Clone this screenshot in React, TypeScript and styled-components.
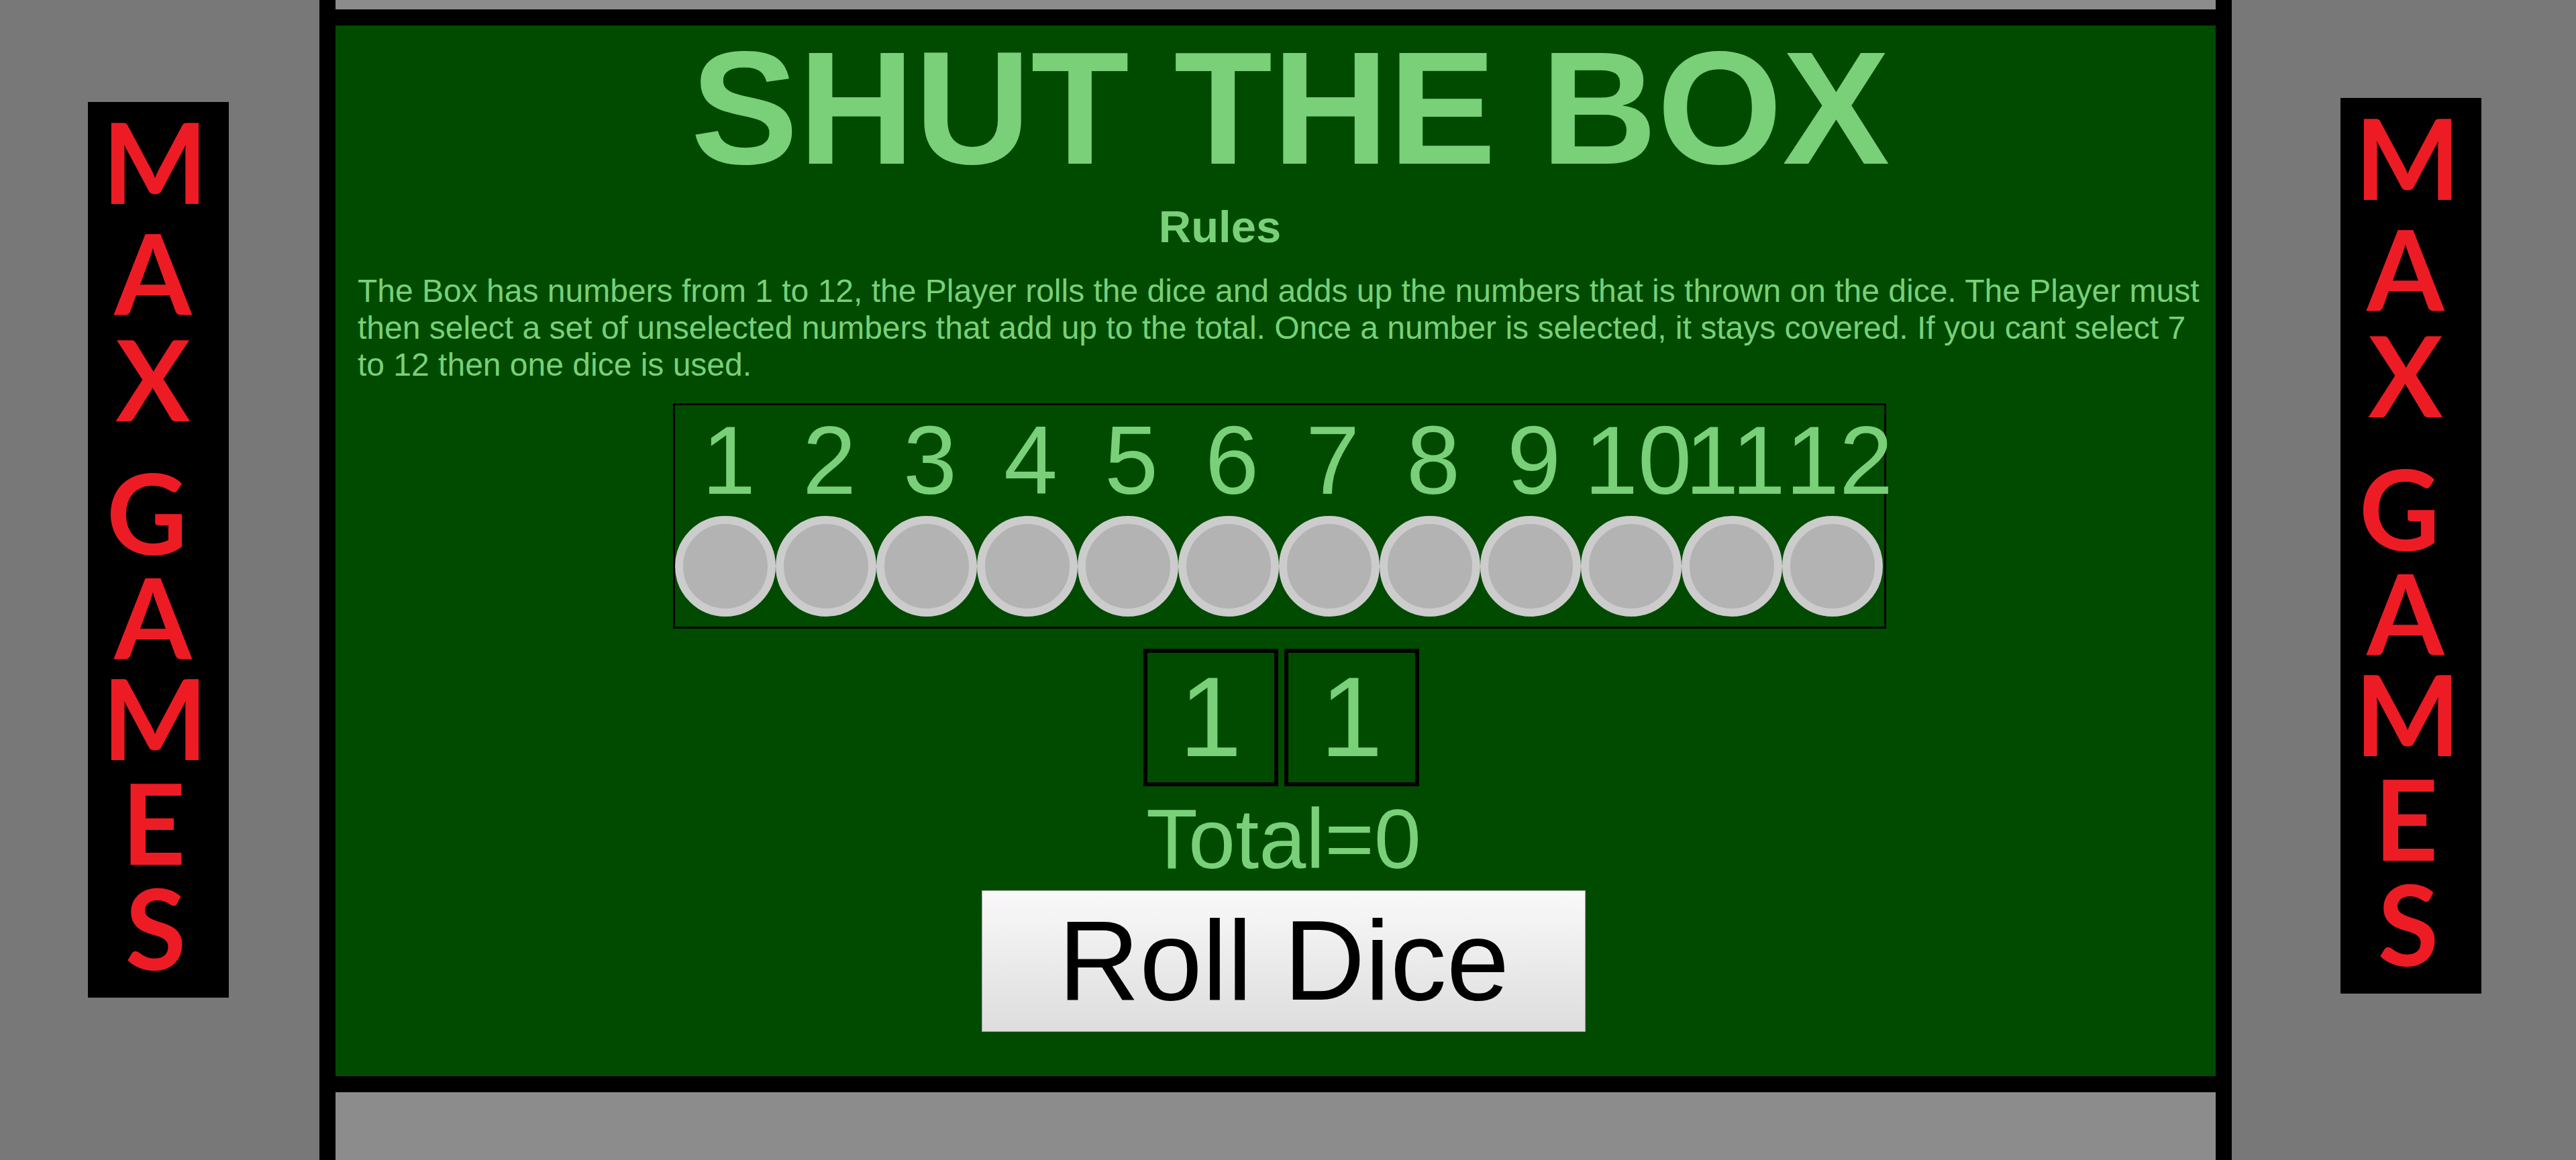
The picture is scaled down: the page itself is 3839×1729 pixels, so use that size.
import React, { useState } from "react";
import styled, { createGlobalStyle } from "styled-components";

const GlobalStyle = createGlobalStyle`
  *, *::before, *::after { box-sizing: border-box; }
  body { margin: 0; background: #787878; }
`;

const sans = `"Liberation Sans", Arial, Helvetica, sans-serif`;

const Page = styled.div`
  display: flex;
  min-height: 100vh;
  font-family: ${sans};
  color: #79d079;
`;

const Cabinet = styled.aside<{ $width: number; $indent: number; $drop: number }>`
  flex: 0 0 ${(p) => p.$width}px;
  padding: ${(p) => p.$drop}px 0 0 ${(p) => p.$indent}px;
  background: #787878;
`;

const SignPlate = styled.svg`
  display: block;
  width: 210px;
  height: 1335px;
  overflow: visible;
  background: #000;
  fill: #ed1c24;
  font-family: Lato, Carlito, Calibri, sans-serif;
  font-size: 166px;
  font-weight: 700;
  text-anchor: middle;
`;

const Machine = styled.div`
  flex: 1;
  min-width: 0;
  display: flex;
  flex-direction: column;
  border: solid #000;
  border-width: 0 24px;
`;

const Strip = styled.div<{ $fill?: boolean }>`
  flex: ${(p) => (p.$fill ? "1 0 0" : "0 0 14px")};
  background: #8c8c8c;
`;

const Screen = styled.main`
  display: flex;
  flex-direction: column;
  align-items: center;
  padding: 0 0 66px 12px;
  border: solid #000;
  border-width: 24px 0;
  background: #004b00;
`;

const Title = styled.h1`
  margin: 0;
  padding-left: 32px;
  font-size: 240px;
  line-height: 246px;
  font-weight: bold;
  white-space: nowrap;
`;

const Subtitle = styled.h2`
  margin: 16px 0 0;
  padding-right: 178px;
  font-size: 67px;
  line-height: 76px;
  font-weight: bold;
`;

const Rules = styled.p`
  align-self: stretch;
  margin: 30px 0 0;
  padding-left: 21px;
  font-size: 48px;
  line-height: 55px;
`;

const Board = styled.section`
  margin-top: 30px;
  padding-bottom: 15px;
  width: 1808px;
  border: 3px solid #000;
`;

const NumberRow = styled.div`
  display: grid;
  grid-template-columns: repeat(12, 150px);
  padding-left: 5px;
`;

const NumberLabel = styled.label`
  font-size: 144px;
  line-height: 165px;
  text-align: center;
  white-space: nowrap;
`;

const CounterRow = styled.div`
  display: grid;
  grid-template-columns: repeat(12, 150px);
`;

const Counter = styled.button<{ $picked: boolean }>`
  height: 150px;
  padding: 0;
  border: 12px solid #cccccc;
  border-radius: 50%;
  background: ${(p) => (p.$picked ? "#ed1c24" : "#b3b3b3")};
  cursor: pointer;
`;

const DiceRow = styled.div`
  display: flex;
  gap: 9px;
  margin-top: 30px;
  padding-left: 4px;
`;

const Die = styled.div`
  width: 201px;
  border: 6px solid #000;
  font-size: 168px;
  line-height: 193px;
  text-align: center;
`;

const Controls = styled.div`
  display: flex;
  flex-direction: column;
  align-items: center;
  gap: 4px;
  padding: 6px 0 0 12px;
`;

const Total = styled.output`
  font-size: 126px;
  line-height: 145px;
`;

const RollButton = styled.button`
  width: 900px;
  height: 211px;
  padding: 0;
  border: 1px solid #a0a0a0;
  background: linear-gradient(#f9f9f9, #dddddd);
  color: #000;
  font-family: ${sans};
  font-size: 168px;
  line-height: 193px;
  cursor: pointer;
`;

const signLetters = [
  { glyph: "M", x: 100, y: 152 },
  { glyph: "A", x: 97, y: 318 },
  { glyph: "X", x: 97, y: 476 },
  { glyph: "G", x: 88, y: 675 },
  { glyph: "A", x: 97, y: 831 },
  { glyph: "M", x: 100, y: 981 },
  { glyph: "E", x: 98, y: 1137 },
  { glyph: "S", x: 101, y: 1294 },
];

const numbers = Array.from({ length: 12 }, (_, i) => i + 1);

function Sign() {
  return (
    <SignPlate viewBox="0 0 210 1335" role="img" aria-label="MAX GAMES">
      {signLetters.map((l) => (
        <text key={l.y} x={l.x} y={l.y}>
          {l.glyph}
        </text>
      ))}
    </SignPlate>
  );
}

export default function App() {
  const [dice, setDice] = useState([1, 1]);
  const [total, setTotal] = useState(0);
  const [picked, setPicked] = useState<number[]>([]);

  const roll = () => {
    const next = dice.map(() => 1 + Math.floor(Math.random() * 6));
    setDice(next);
    setTotal(next[0] + next[1]);
  };

  const pick = (n: number) =>
    setPicked((list) => (list.includes(n) ? list : [...list, n]));

  return (
    <>
      <GlobalStyle />
      <Page>
        <Cabinet $width={476} $indent={131} $drop={152}>
          <Sign />
        </Cabinet>
        <Machine>
          <Strip />
          <Screen>
            <Title>SHUT THE BOX</Title>
            <Subtitle>Rules</Subtitle>
            <Rules>
              The Box has numbers from 1 to 12, the Player rolls the dice and
              adds up the numbers that is thrown on the dice. The Player must
              then select a set of unselected numbers that add up to the total.
              Once a number is selected, it stays covered. If you cant select 7
              to 12 then one dice is used.
            </Rules>
            <Board>
              <NumberRow>
                {numbers.map((n) => (
                  <NumberLabel key={n} htmlFor={`counter-${n}`}>
                    {n}
                  </NumberLabel>
                ))}
              </NumberRow>
              <CounterRow>
                {numbers.map((n) => (
                  <Counter
                    key={n}
                    id={`counter-${n}`}
                    type="button"
                    $picked={picked.includes(n)}
                    onClick={() => pick(n)}
                  />
                ))}
              </CounterRow>
            </Board>
            <DiceRow>
              {dice.map((value, i) => (
                <Die key={i}>{value}</Die>
              ))}
            </DiceRow>
            <Controls>
              <Total>Total={total}</Total>
              <RollButton type="button" onClick={roll}>
                Roll Dice
              </RollButton>
            </Controls>
          </Screen>
          <Strip $fill />
        </Machine>
        <Cabinet $width={513} $indent={162} $drop={146}>
          <Sign />
        </Cabinet>
      </Page>
    </>
  );
}
